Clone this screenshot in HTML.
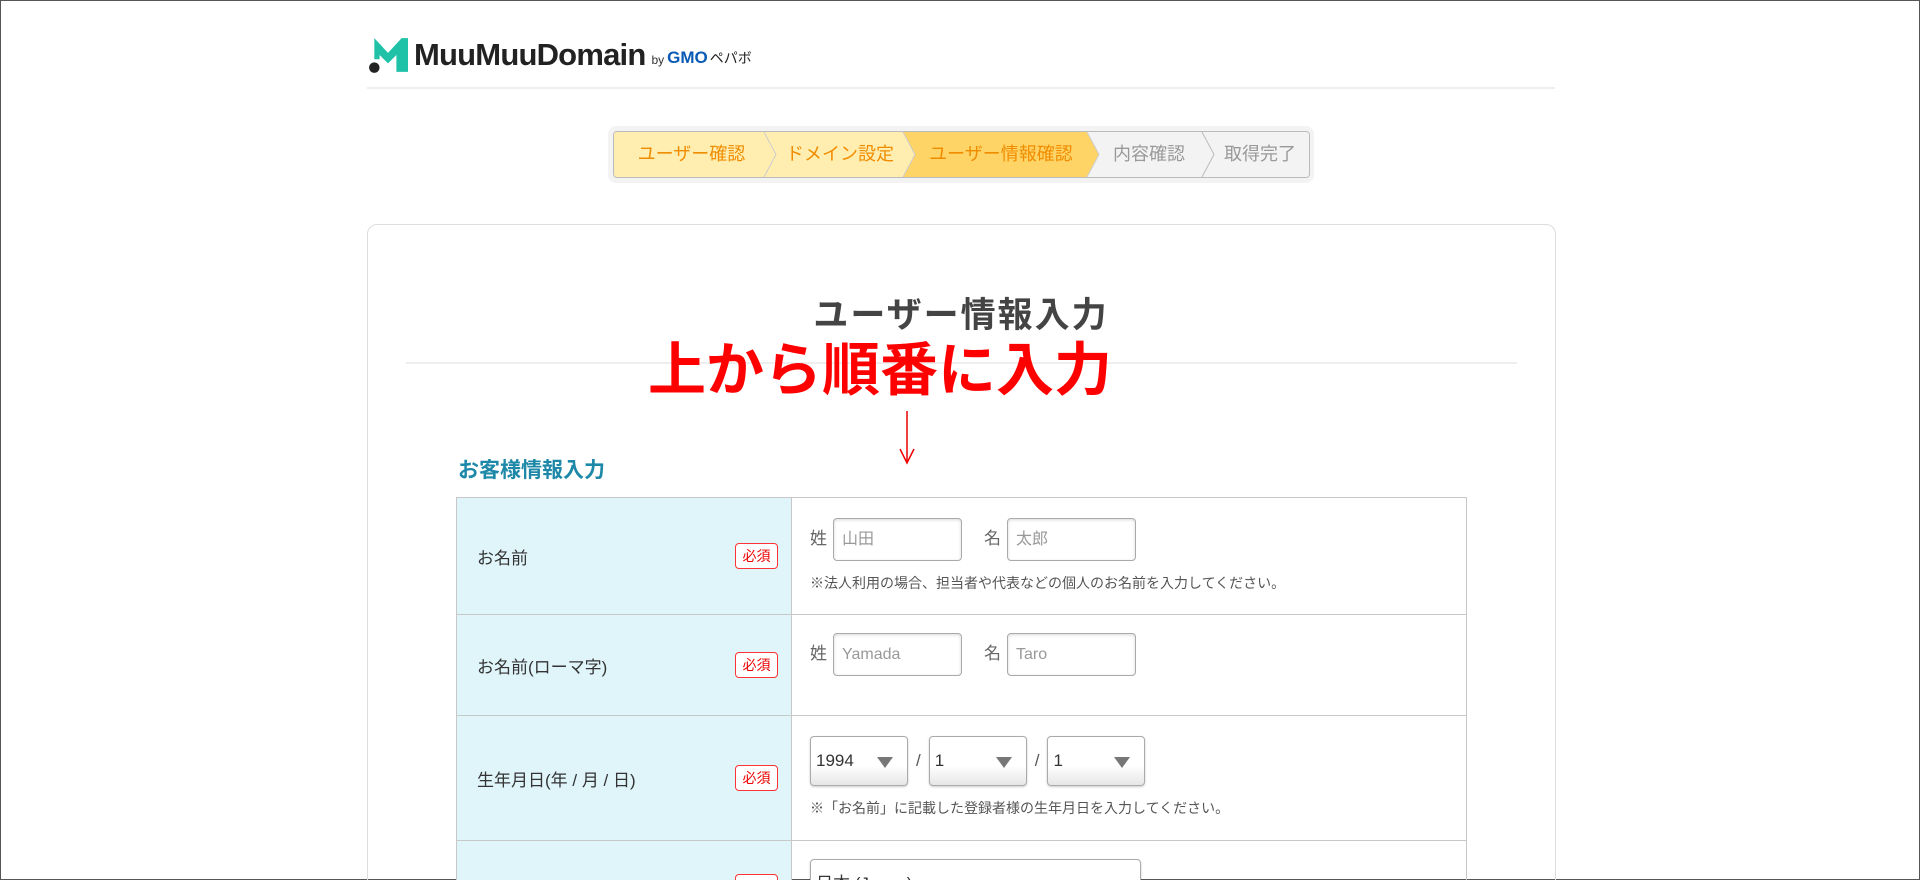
<!DOCTYPE html>
<html><head><meta charset="utf-8">
<style>
*{box-sizing:border-box;margin:0;padding:0}
html,body{width:1920px;height:880px;overflow:hidden;background:#fff}
body{position:relative;font-family:"Liberation Sans","Noto Sans CJK JP",sans-serif;color:#333;border:1px solid #555}
.abs{position:absolute}
.logo{left:367px;top:35px;display:flex;align-items:center}
.logo .w{font-weight:bold;font-size:31px;color:#222;letter-spacing:-0.8px;margin-left:6px}
.logo .by{font-size:12px;color:#333;margin:10px 3px 0 6px}
.logo .g{font-weight:bold;font-size:17px;color:#0a5bb5;margin-top:6px}
.hline{left:366px;top:86px;width:1188px;height:2px;background:#eee}
.steps{left:607px;top:125px;width:706px;height:57px;background:#f3f3f3;border-radius:8px}
.bar{left:612px;top:130px;width:697px;height:47px;border:1px solid #bbb;border-radius:4px;overflow:hidden}
.seg{position:absolute;top:0;height:45px;line-height:45px;font-size:18px;text-align:center}
.card{left:366px;top:223px;width:1189px;height:700px;border:1px solid #ddd;border-radius:10px}
.title{left:0;width:1920px;top:286px;text-align:center;font-size:35px;font-weight:bold;color:#444;letter-spacing:2px}
.div{left:405px;top:361px;width:1111px;height:2px;background:#eee}
.red{left:647px;top:335px;font-size:58px;font-weight:bold;color:#f00;letter-spacing:0px;line-height:70px}
.h2{left:457px;top:453px;font-size:21px;font-weight:bold;color:#1e88a8}
table{position:absolute;left:455px;top:496px;width:1011px;border-collapse:collapse}
td{border:1px solid #c8c8c8;vertical-align:middle}
td.l{width:335px;background:#e0f5fa;padding-left:20px;font-size:17px;position:relative}
.badge{position:absolute;left:278px;top:50%;margin-top:-13px;width:43px;height:26px;border:1px solid #f33;border-radius:4px;color:#e00;font-size:14px;text-align:center;line-height:24px;background:#fff}
td.r{padding-left:18px;font-size:17px;color:#666}
.inp{display:inline-block;vertical-align:middle;width:129px;height:43px;border:1px solid #aaa;border-radius:4px;box-shadow:inset 0 1px 3px rgba(0,0,0,.15);font-size:16px;color:#999;line-height:41px;padding-left:8px;margin:0 22px 0 6px}
.note{font-size:14px;color:#555;margin-top:12px}
.sel{display:inline-block;vertical-align:middle;width:98px;height:50px;border:1px solid #aaa;border-radius:4px;background:linear-gradient(#fff,#fff 60%,#e6e6e6);box-shadow:0 1px 2px rgba(0,0,0,.2);font-size:17px;color:#333;line-height:48px;padding-left:5px;position:relative}
.sel:after{content:"";position:absolute;right:14px;top:20px;border-left:8px solid transparent;border-right:8px solid transparent;border-top:11px solid #777}
.sl{display:inline-block;vertical-align:middle;margin:0 8px;color:#555}
</style></head><body>
<div class="abs logo">
<svg width="40" height="38" viewBox="0 0 38 36"><path d="M6 2 L19 16 L32 2 L38 2 L38 34 L27 34 L27 18 L19 26 L11 18 L11 22 L6 22 Z" fill="#1fc1a7"/><circle cx="6" cy="30" r="5" fill="#222"/></svg>
<span class="w">MuuMuuDomain</span><span class="by">by</span><span class="g">GMO</span><span class="g" style="font-weight:normal;font-size:14px;color:#222;margin-left:2px">ペパボ</span>
</div>
<div class="abs hline"></div>
<div class="abs steps"></div>
<div class="abs bar">
<svg class="abs" style="left:0;top:0" width="697" height="45"><polygon points="0,0 150,0 162,22.5 150,45 0,45" fill="#ffeeb0"/><polygon points="150,0 289,0 301,22.5 289,45 150,45 162,22.5" fill="#ffeeb0"/><polygon points="289,0 473,0 485,22.5 473,45 289,45 301,22.5" fill="#ffd466"/><polygon points="473,0 697,0 697,45 473,45 485,22.5" fill="#f3f3f3"/><polyline points="150,0 162,22.5 150,45" fill="none" stroke="#ccc"/><polyline points="289,0 301,22.5 289,45" fill="none" stroke="#ccc"/><polyline points="473,0 485,22.5 473,45" fill="none" stroke="#ccc"/><polyline points="588,0 600,22.5 588,45" fill="none" stroke="#bbb"/></svg>
<div class="seg" style="left:0;width:155px;color:#f08c00">ユーザー確認</div>
<div class="seg" style="left:158px;width:136px;color:#f08c00">ドメイン設定</div>
<div class="seg" style="left:297px;width:180px;color:#f08c00">ユーザー情報確認</div>
<div class="seg" style="left:480px;width:110px;color:#999">内容確認</div>
<div class="seg" style="left:596px;width:100px;color:#999">取得完了</div>
</div>
<div class="abs card"></div>
<div class="abs title">ユーザー情報入力</div>
<div class="abs div"></div>
<div class="abs red">上から順番に入力</div>
<svg class="abs" style="left:896px;top:410px" width="20" height="54"><line x1="10" y1="0" x2="10" y2="52" stroke="#e00" stroke-width="1.5"/><polyline points="3,38 10,52 17,38" fill="none" stroke="#e00" stroke-width="1.5"/></svg>
<div class="abs h2">お客様情報入力</div>
<table>
<tr style="height:117px"><td class="l">お名前<span class="badge">必須</span></td><td class="r"><div style="margin-top:-2px">姓<span class="inp">山田</span>名<span class="inp">太郎</span></div><div class="note">※法人利用の場合、担当者や代表などの個人のお名前を入力してください。</div></td></tr>
<tr style="height:101px"><td class="l">お名前(ローマ字)<span class="badge">必須</span></td><td class="r"><div style="margin-top:-22px">姓<span class="inp">Yamada</span>名<span class="inp">Taro</span></div></td></tr>
<tr style="height:125px"><td class="l">生年月日(年 / 月 / 日)<span class="badge">必須</span></td><td class="r"><div style="margin-top:-2px"><span class="sel">1994</span><span class="sl">/</span><span class="sel">1</span><span class="sl">/</span><span class="sel">1</span></div><div class="note">※「お名前」に記載した登録者様の生年月日を入力してください。</div></td></tr>
<tr style="height:92px"><td class="l">国<span class="badge">必須</span></td><td class="r" style="vertical-align:top;padding-top:18px"><span class="sel" style="width:331px">日本 (Japan)</span></td></tr>
</table>
</body></html>
